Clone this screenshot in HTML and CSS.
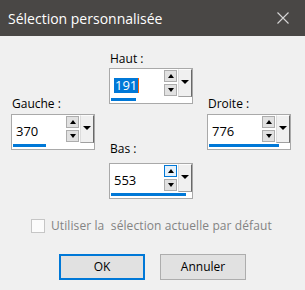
FILE: index.html
```html
<!doctype html>
<html lang="fr">
<head>
	<meta charset="utf-8">
	<title>Sélection personnalisée</title>
	<link rel="stylesheet" href="styles.css">
</head>
<body>
	<div class="dialog">
		<div class="titlebar">
			<span class="title">Sélection personnalisée</span>
			<svg class="close" width="12" height="12" viewBox="0 0 12 12"><path d="M0.5 0.5L11.5 11.5M11.5 0.5L0.5 11.5" stroke="#d6d6d6" stroke-width="1.1" fill="none"/></svg>
		</div>

		<div class="content">
			<div class="spins">
				<div class="field f-haut">
					<div class="label">Haut :</div>
					<div class="spin">
						<div class="value"><span class="sel">191</span><span class="caret"></span></div>
						<div class="arrows"><span class="arr up"></span><span class="arr down"></span></div>
						<div class="drop"><span class="tri"></span></div>
						<div class="bar"><div class="fill" style="width:25px"></div></div>
					</div>
				</div>

				<div class="field f-gauche">
					<div class="label">Gauche :</div>
					<div class="spin">
						<div class="value">370</div>
						<div class="arrows"><span class="arr up"></span><span class="arr down"></span></div>
						<div class="drop"><span class="tri"></span></div>
						<div class="bar"><div class="fill" style="width:33px"></div></div>
					</div>
				</div>

				<div class="field f-droite">
					<div class="label">Droite :</div>
					<div class="spin">
						<div class="value">776</div>
						<div class="arrows"><span class="arr up"></span><span class="arr down"></span></div>
						<div class="drop"><span class="tri"></span></div>
						<div class="bar"><div class="fill" style="width:70px"></div></div>
					</div>
				</div>

				<div class="field f-bas">
					<div class="label">Bas :</div>
					<div class="spin">
						<div class="value">553</div>
						<div class="arrows"><span class="arr up hover"></span><span class="arr down"></span></div>
						<div class="drop"><span class="tri"></span></div>
						<div class="bar"><div class="fill" style="width:75px"></div></div>
					</div>
				</div>
			</div>

			<label class="check">
				<span class="box"></span>
				<span class="check-text">Utiliser la&nbsp; sélection actuelle par défaut</span>
			</label>

			<div class="buttons">
				<button class="btn default">OK</button>
				<button class="btn">Annuler</button>
			</div>
		</div>
	</div>
</body>
</html>
```

FILE: styles.css
```css
body {
	margin: 0;
	font: 12px/16px "Open Sans", Arial, sans-serif;
	color: #000;
	background: #f0f0f0;
}

.dialog {
	width: 305px;
	height: 290px;
	background: #f0f0f0;
}

/* Title bar */
.titlebar {
	height: 36px;
	background: #494745;
	display: flex;
	align-items: center;
	justify-content: space-between;
	padding: 0 16px 0 8px;
	box-sizing: border-box;
}
.title {
	color: #fff;
	font-size: 14px;
	line-height: 18px;
	padding-top: 1px;
}
.close {
	display: block;
}

/* Spin boxes laid out as a cross */
.spins {
	display: grid;
	grid-template-columns: repeat(3, 84px);
	grid-template-rows: 45px 8px 37px 9px 49px;
	column-gap: 14px;
	margin: 15px 0 0 11px;
}
.field {
	display: flex;
	flex-direction: column;
	justify-content: space-between;
}
.f-haut { grid-column: 2; grid-row: 1 / 3; }
.f-gauche { grid-column: 1; grid-row: 2 / 5; }
.f-droite { grid-column: 3; grid-row: 2 / 5; }
.f-bas { grid-column: 2; grid-row: 4 / 6; }

.label {
	padding-left: 1px;
}

.spin {
	height: 36px;
	box-sizing: border-box;
	border: 1px solid #a9a9a9;
	background: #fff;
	display: grid;
	grid-template-columns: 1fr 13px 15px;
	grid-template-rows: 28px 3px;
	row-gap: 1px;
	padding-bottom: 2px;
}
.value {
	font-size: 13px;
	line-height: 15px;
	padding: 4px 0 0 4px;
	display: flex;
	align-items: center;
}
.sel {
	background: #0078d7;
	color: #fff;
	padding: 0 1px;
}
.caret {
	width: 1px;
	height: 15px;
	background: #f7630c;
}

.arrows {
	display: flex;
	flex-direction: column;
	gap: 2px;
	padding-top: 1px;
}
.arr {
	height: 12px;
	box-sizing: border-box;
	border: 1px solid #adadad;
	background: #e1e1e1;
	display: flex;
	align-items: center;
	justify-content: center;
}
.arr.hover {
	border-color: #0078d7;
	background: #e5f1fb;
}
.arr.up::after {
	content: "";
	border-left: 3.5px solid transparent;
	border-right: 3.5px solid transparent;
	border-bottom: 4px solid #000;
}
.arr.down::after {
	content: "";
	border-left: 3.5px solid transparent;
	border-right: 3.5px solid transparent;
	border-top: 4px solid #000;
}

.drop {
	margin-left: 1px;
	box-sizing: border-box;
	background: #f0f0f0;
	border-top: 1px solid #fcfcfc;
	border-left: 1px solid #dcdcdc;
	border-right: 1px solid #696969;
	border-bottom: 1px solid #a0a0a0;
	display: flex;
	justify-content: center;
	padding-top: 10px;
}
.tri {
	width: 0;
	height: 0;
	border-left: 4px solid transparent;
	border-right: 4px solid transparent;
	border-top: 4px solid #000;
}

.bar {
	grid-column: 1 / -1;
	padding-left: 1px;
}
.fill {
	height: 3px;
	background: #0078d7;
}

/* Checkbox */
.check {
	display: flex;
	align-items: center;
	gap: 6px;
	margin: 19px 0 0 31px;
	color: #838383;
	letter-spacing: 0.1px;
}
.box {
	width: 14px;
	height: 14px;
	box-sizing: border-box;
	border: 1px solid #c6c6c6;
	background: #fcfcfc;
}

/* Buttons */
.buttons {
	display: flex;
	justify-content: center;
	gap: 15px;
	margin-top: 20px;
}
.btn {
	width: 86px;
	height: 26px;
	box-sizing: border-box;
	border: 1px solid #adadad;
	background: #e1e1e1;
	font: 12px/16px "Open Sans", Arial, sans-serif;
	color: #000;
	padding: 0;
}
.btn.default {
	border: 2px solid #0078d7;
}
```
